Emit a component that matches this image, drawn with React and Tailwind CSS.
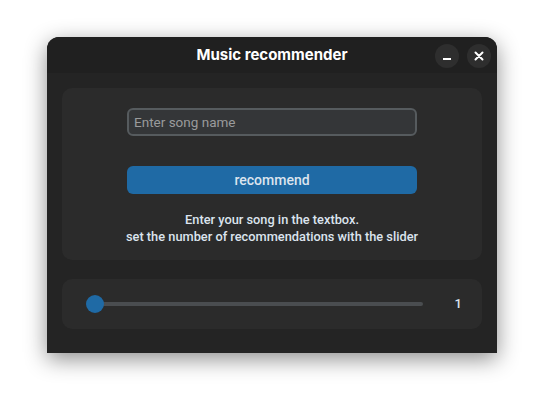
import React from "react";

export default function App() {
  return (
    <div className="w-[544px] h-[410px] bg-white pt-[37px] pl-[47px]" style={{ fontFamily: "Roboto, 'Noto Sans', sans-serif" }}>
      <div className="w-[450px] h-[316px] rounded-t-[12px] bg-[#242424] shadow-[0_6px_22px_rgba(0,0,0,0.45)] flex flex-col overflow-hidden">
        <div className="h-[36px] bg-[#202020] flex items-center relative shrink-0">
          <div className="flex-1 text-center text-white text-[15px] font-bold" style={{ fontFamily: "Inter, 'Noto Sans', sans-serif" }}>
            Music recommender
          </div>
          <div className="absolute right-[6px] top-[7px] flex gap-[8px]">
            <div className="w-[24px] h-[24px] rounded-full bg-[#2e2e2e] flex items-center justify-center">
              <div className="w-[8px] h-[2px] bg-white mt-[5px]"></div>
            </div>
            <div className="w-[24px] h-[24px] rounded-full bg-[#2e2e2e] flex items-center justify-center">
              <svg width="10" height="10" viewBox="0 0 10 10">
                <path d="M1.5 1.5L8.5 8.5M8.5 1.5L1.5 8.5" stroke="white" strokeWidth="2" strokeLinecap="round" />
              </svg>
            </div>
          </div>
        </div>
        <div className="px-[15px] pt-[15px] flex flex-col gap-[19px]">
          <div className="h-[172px] rounded-[10px] bg-[#2b2b2b] flex flex-col items-center pt-[20px]">
            <div className="w-[290px] h-[28px] rounded-[6px] border-2 border-[#565b5e] bg-[#343638] flex items-center px-[5px]">
              <span className="text-[13.5px] text-[#9a9b9c]">Enter song name</span>
            </div>
            <div className="mt-[30px] w-[290px] h-[28px] rounded-[6px] bg-[#1f6aa5] flex items-center justify-center">
              <span className="text-[14px] text-[#dce4ee] font-medium">recommend</span>
            </div>
            <div className="mt-[17px] text-center text-[12.8px] leading-[17px] text-[#dce4ee] font-medium">
              <div>Enter your song in the textbox.</div>
              <div>set the number of recommendations with the slider</div>
            </div>
          </div>
          <div className="h-[50px] rounded-[10px] bg-[#2b2b2b] flex items-center pl-[24px] pr-[20px]">
            <div className="relative w-[337px] h-[18px] flex items-center">
              <div className="ml-[9px] w-[328px] h-[4px] rounded-full bg-[#4a4d50]"></div>
              <div className="absolute left-0 top-0 w-[18px] h-[18px] rounded-full bg-[#1f6aa5]"></div>
            </div>
            <div className="flex-1 text-right text-[13px] text-[#dce4ee] font-medium">1</div>
          </div>
        </div>
      </div>
    </div>
  );
}
